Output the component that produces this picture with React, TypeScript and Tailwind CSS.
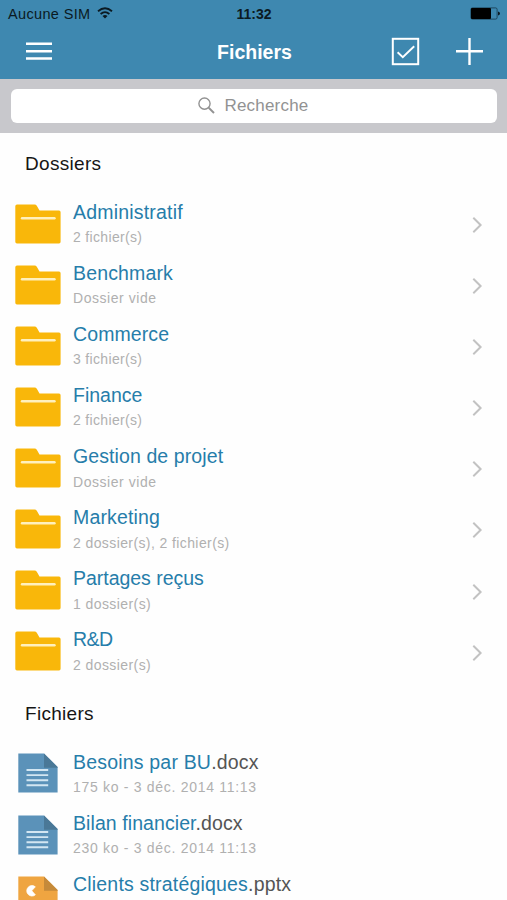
import React from "react";

const folders = [
  { name: "Administratif", info: "2 fichier(s)", spacing: "tracking-[0.2px]", infoSpacing: "tracking-[0.33px]" },
  { name: "Benchmark", info: "Dossier vide", spacing: "tracking-[0.15px]", infoSpacing: "tracking-[0.55px]" },
  { name: "Commerce", info: "3 fichier(s)", spacing: "tracking-[0.1px]", infoSpacing: "tracking-[0.33px]" },
  { name: "Finance", info: "2 fichier(s)", spacing: "tracking-[0px]", infoSpacing: "tracking-[0.33px]" },
  { name: "Gestion de projet", info: "Dossier vide", spacing: "tracking-[0.1px]", infoSpacing: "tracking-[0.55px]" },
  { name: "Marketing", info: "2 dossier(s), 2 fichier(s)", spacing: "tracking-[0.15px]", infoSpacing: "tracking-[0.4px]" },
  { name: "Partages reçus", info: "1 dossier(s)", spacing: "tracking-[-0.03px]", infoSpacing: "tracking-[0.42px]" },
  { name: "R&D", info: "2 dossier(s)", spacing: "tracking-[-0.6px]", infoSpacing: "tracking-[0.42px]" },
];

const files = [
  { name: "Besoins par BU", ext: ".docx", info: "175 ko - 3 déc. 2014 11:13", kind: "doc", spacing: "tracking-[0.19px]" },
  { name: "Bilan financier", ext: ".docx", info: "230 ko - 3 déc. 2014 11:13", kind: "doc", spacing: "tracking-[0.08px]" },
  { name: "Clients stratégiques", ext: ".pptx", info: "", kind: "ppt", spacing: "tracking-[0.19px]" },
];

function FolderIcon() {
  return (
    <svg width="46" height="40" viewBox="0 0 46 40">
      <path d="M2 .5H19.5Q21 .5 21.8 1.8L24.5 6.5H44Q45.6 6.5 45.6 8.2V37.8Q45.6 39.6 44 39.6H2Q.3 39.6 .3 37.8V2.3Q.3 .5 2 .5Z" fill="#f9b70a" />
      <path d="M7 14.3H39.5" stroke="#fff0bd" strokeWidth="2.4" strokeLinecap="round" />
    </svg>
  );
}

function FileIcon({ kind }: { kind: string }) {
  const doc = kind === "doc";
  return (
    <svg width="40" height="40" viewBox="0 0 40 40">
      <path d="M.3 .5H26L39.6 14V39.5H.3Z" fill={doc ? "#5b92b9" : "#efa541"} />
      <path d="M26 .5L39.6 14V14.7H26Z" fill={doc ? "#4a7897" : "#c58a3a"} />
      {doc ? (
        <path d="M8.5 17H30.2M8.5 22.1H30.2M8.5 27.2H30.2M8.5 32.3H30.2" stroke="#d3e6f2" strokeWidth="1.9" />
      ) : (
        <path d="M17.3 10.8A5.2 5.2 0 1 0 17.3 18.8L13.7 14.8Z" fill="#fff" stroke="#fff" strokeWidth=".8" />
      )}
    </svg>
  );
}

function Section({ children }: { children: React.ReactNode }) {
  return (
    <h2 className="flex h-[61.05px] items-center pt-[2px] pl-[25px] text-[19px] tracking-[0.3px] text-[#151515]">
      {children}
    </h2>
  );
}

type RowProps = {
  icon: React.ReactNode;
  title: React.ReactNode;
  info: string;
  spacing: string;
  infoSpacing: string;
  arrow?: boolean;
};

function Row({ icon, title, info, spacing, infoSpacing, arrow }: RowProps) {
  return (
    <li className="flex h-[61.05px] pl-[15px]">
      <div className="flex w-[46px] shrink-0 justify-center pt-[9.6px]">{icon}</div>
      <div className="ml-[12px] grow pt-[5.7px]">
        <p className={`h-6 text-[19.5px] leading-6 whitespace-nowrap text-[#267daa] ${spacing}`}>{title}</p>
        <p className={`mt-[3.6px] h-5 text-[14px] leading-5 whitespace-nowrap text-[#b0b0b0] ${infoSpacing}`}>{info}</p>
      </div>
      {arrow && (
        <svg className="mt-[22.2px] mr-[22px] shrink-0" width="14" height="18" viewBox="0 0 14 18">
          <path d="M2.3 1.8L9.6 9L2.3 16.2" fill="none" stroke="#c2c2c2" strokeWidth="2" />
        </svg>
      )}
    </li>
  );
}

export default function App() {
  return (
    <div className="h-[900px] w-[507px] overflow-hidden bg-[#fefefe] font-['Liberation_Sans',Arial,sans-serif]">
      <header className="h-[79px] bg-[#3e88b0]">
        <div className="grid h-[27px] grid-cols-3 items-center pr-[7px] pl-[8px] text-[14.5px] text-[#0b1a22]">
          <div className="flex items-center gap-[6px]">
            <span className="pt-[2px] tracking-[0.35px] whitespace-nowrap">Aucune SIM</span>
            <svg className="-mt-[2px]" width="16" height="12" viewBox="0 0 16 12" fill="none" stroke="#0b1a22" strokeWidth="1.8">
              <path d="M1 4.2Q8-1.8 15 4.2M3.6 7Q8 3.2 12.4 7" />
              <path d="M5.5 8.9Q8 7 10.5 8.9L8 11.6Z" fill="#0b1a22" stroke="none" />
            </svg>
          </div>
          <span className="pt-px text-center text-[14px] font-bold">11:32</span>
          <svg className="justify-self-end" width="30" height="13" viewBox="0 0 30 13">
            <rect x=".9" y=".9" width="26.2" height="11.2" rx="1.5" fill="none" stroke="#17394b" strokeWidth=".8" />
            <rect x="1" y="1" width="20" height="11" rx="1" fill="#000" />
            <path d="M28 4.5Q30 5 30 6.5Q30 8 28 8.5Z" fill="#0b1a22" />
          </svg>
        </div>
        <div className="grid h-[48px] grid-cols-3 items-center pr-[23px] pl-[25px] text-white">
          <svg width="28" height="20" viewBox="0 0 28 20" stroke="white" strokeWidth="2.5">
            <path d="M1 2.7H27M1 10.2H27M1 17.5H27" />
          </svg>
          <h1 className="pt-[4px] text-center text-[19.5px] font-bold">Fichiers</h1>
          <div className="flex items-center justify-end gap-[35px]">
            <svg width="29" height="29" viewBox="0 0 29 29" fill="none" stroke="white">
              <rect x="1.8" y="1.8" width="25.4" height="25.4" strokeWidth="2" />
              <path d="M6.6 15.2L11.8 20.1L23.2 9.2" strokeWidth="1.9" />
            </svg>
            <svg width="29" height="29" viewBox="0 0 29 29" stroke="white" strokeWidth="2.4">
              <path d="M1 14.3H28M14.5 1V28" />
            </svg>
          </div>
        </div>
      </header>
      <div className="h-[54px] bg-[#c8c8cc] px-[10.5px] pt-[9.5px]">
        <div className="flex h-[34px] items-center justify-center gap-[9px] rounded-[6px] bg-white text-[17px] tracking-[0.2px] text-[#929292]">
          <svg width="17" height="17" viewBox="0 0 17 17" fill="none" stroke="#929292">
            <circle cx="6.5" cy="6.6" r="5.6" strokeWidth="1.4" />
            <path d="M10.7 10.8L16 16" strokeWidth="1.9" />
          </svg>
          <span>Recherche</span>
        </div>
      </div>
      <main>
        <Section>Dossiers</Section>
        <ul>
          {folders.map((f) => (
            <Row key={f.name} icon={<FolderIcon />} title={f.name} info={f.info} spacing={f.spacing} infoSpacing={f.infoSpacing} arrow />
          ))}
        </ul>
        <Section>Fichiers</Section>
        <ul className="pt-[0.4px]">
          {files.map((f) => (
            <Row
              key={f.name}
              icon={<FileIcon kind={f.kind} />}
              title={<>{f.name}<span className="text-[#555]">{f.ext}</span></>}
              info={f.info}
              spacing={f.spacing}
              infoSpacing="tracking-[0.7px]"
            />
          ))}
        </ul>
      </main>
    </div>
  );
}
